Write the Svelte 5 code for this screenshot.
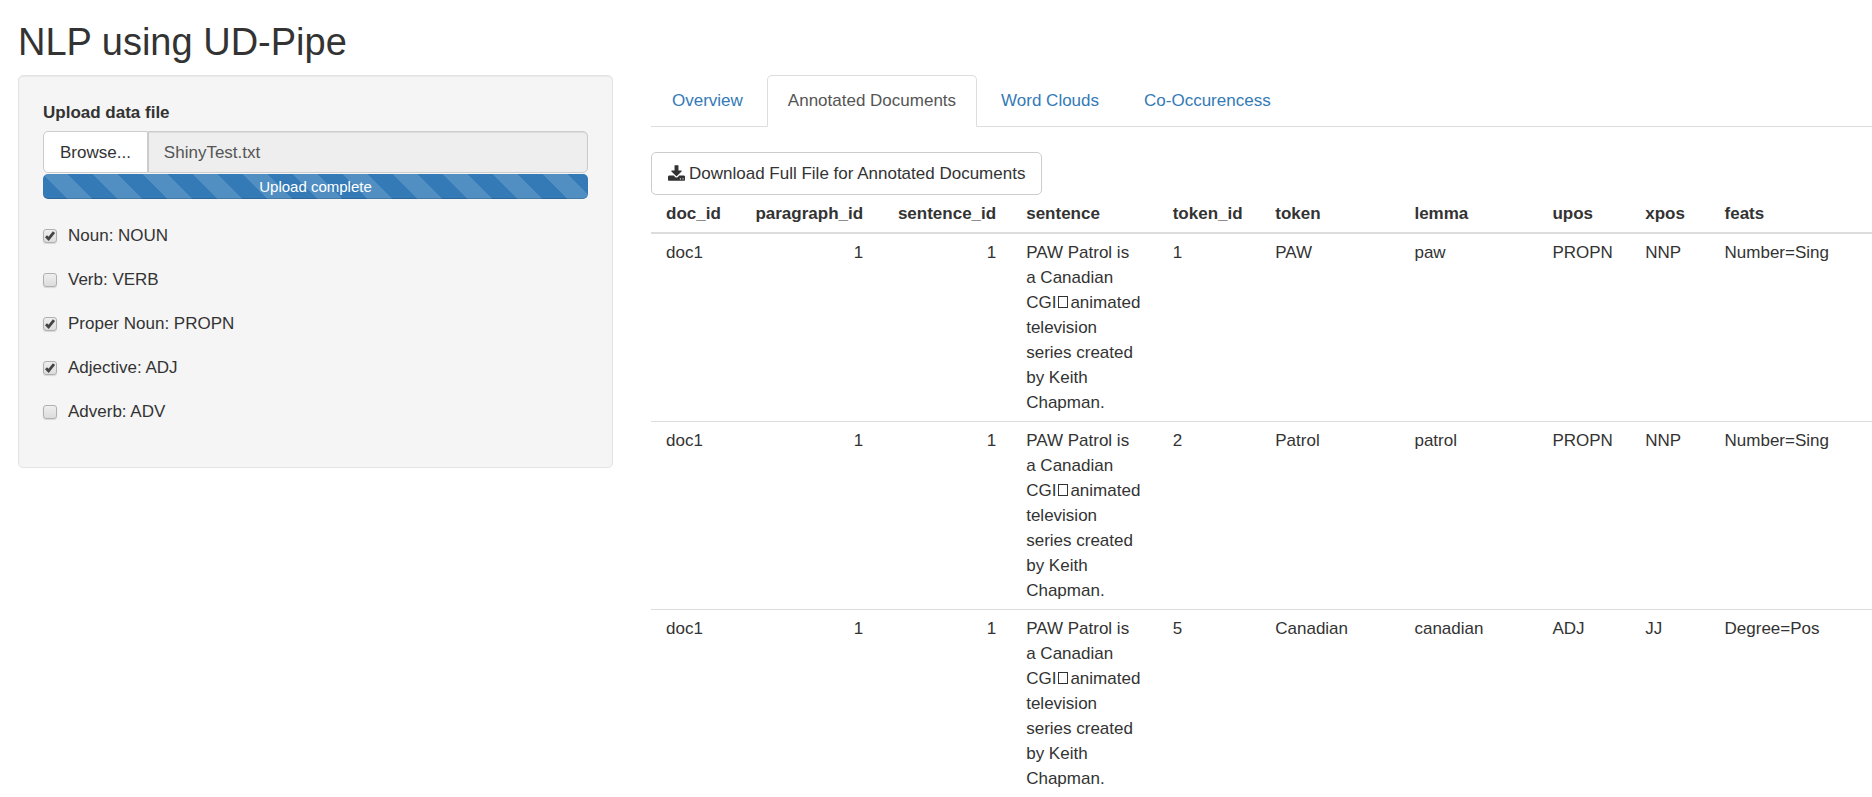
<script>
  const tabs = ['Overview', 'Annotated Documents', 'Word Clouds', 'Co-Occurencess'];
  let active = $state('Annotated Documents');

  let filters = $state([
    { id: 'noun', label: 'Noun: NOUN', checked: true },
    { id: 'verb', label: 'Verb: VERB', checked: false },
    { id: 'propn', label: 'Proper Noun: PROPN', checked: true },
    { id: 'adj', label: 'Adjective: ADJ', checked: true },
    { id: 'adv', label: 'Adverb: ADV', checked: false }
  ]);

  const columns = [
    { key: 'doc_id', width: 7.1 },
    { key: 'paragraph_id', width: 11.5, numeric: true },
    { key: 'sentence_id', width: 10.9, numeric: true },
    { key: 'sentence', width: 12 },
    { key: 'token_id', width: 8.4 },
    { key: 'token', width: 11.4 },
    { key: 'lemma', width: 11.3 },
    { key: 'upos', width: 7.6 },
    { key: 'xpos', width: 6.5 },
    { key: 'feats', width: 13.3 }
  ];

  const base = { doc_id: 'doc1', paragraph_id: 1, sentence_id: 1 };
  const rows = [
    { ...base, token_id: 1, token: 'PAW', lemma: 'paw', upos: 'PROPN', xpos: 'NNP', feats: 'Number=Sing' },
    { ...base, token_id: 2, token: 'Patrol', lemma: 'patrol', upos: 'PROPN', xpos: 'NNP', feats: 'Number=Sing' },
    { ...base, token_id: 5, token: 'Canadian', lemma: 'canadian', upos: 'ADJ', xpos: 'JJ', feats: 'Degree=Pos' }
  ];
</script>

<div class="page">
  <h2>NLP using UD-Pipe</h2>
  <div class="layout">
    <form class="well">
      <label class="title" for="file-name">Upload data file</label>
      <div class="file">
        <button type="button">Browse...</button>
        <input id="file-name" type="text" value="ShinyTest.txt" readonly />
      </div>
      <div class="progress">Upload complete</div>
      <div class="filters">
        {#each filters as f (f.id)}
          <label for={f.id}><input id={f.id} type="checkbox" bind:checked={f.checked} />{f.label}</label>
        {/each}
      </div>
    </form>

    <main>
      <nav>
        {#each tabs as tab}
          <a href="#tab" class:active={tab === active} onclick={() => (active = tab)}>{tab}</a>
        {/each}
      </nav>
      <button class="download" type="button">
        <svg viewBox="0 0 1664 1536" aria-hidden="true"><path d="M1280 1344q0-26-19-45t-45-19-45 19-19 45 19 45 45 19 45-19 19-45zM1536 1344q0-26-19-45t-45-19-45 19-19 45 19 45 45 19 45-19 19-45zM1664 1120v320q0 40-28 68t-68 28h-1472q-40 0-68-28t-28-68v-320q0-40 28-68t68-28h465l135 136q58 56 136 56t136-56l136-136h464q40 0 68 28t28 68zM1339 551q17 41-14 70l-448 448q-18 19-45 19t-45-19l-448-448q-31-29-14-70 17-39 59-39h256v-448q0-26 19-45t45-19h256q26 0 45 19t19 45v448h256q42 0 59 39z" /></svg>
        Download Full File for Annotated Documents
      </button>
      <table>
        <colgroup>
          {#each columns as c}<col style="width: {c.width}%" />{/each}
        </colgroup>
        <thead>
          <tr>{#each columns as c}<th class:numeric={c.numeric}>{c.key}</th>{/each}</tr>
        </thead>
        <tbody>
          {#each rows as row}
            <tr>
              {#each columns as c}
                {#if c.key === 'sentence'}
                  <td>PAW Patrol is a Canadian <span class="word">CGI<span class="box"></span>animated</span> television series created by Keith Chapman.</td>
                {:else}
                  <td class:numeric={c.numeric}>{row[c.key]}</td>
                {/if}
              {/each}
            </tr>
          {/each}
        </tbody>
      </table>
    </main>
  </div>
</div>

<style>
  :global(body) {
    margin: 0;
    background: #fff;
  }
  .page {
    padding: 21px 0 0 18px;
    color: #333;
    font: 17px/25px "Liberation Sans", Arial, sans-serif;
  }
  .page * {
    box-sizing: border-box;
  }
  h2 {
    margin: 0 0 12px;
    font-size: 38px;
    line-height: 42px;
    font-weight: 400;
  }
  .layout {
    display: grid;
    grid-template-columns: 595fr 1221fr;
    gap: 38px;
    align-items: start;
  }
  button,
  input {
    margin: 0;
    color: inherit;
    font: inherit;
  }
  .well {
    padding: 24px;
    background: #f5f5f5;
    border: 1px solid #e3e3e3;
    border-radius: 5px;
    box-shadow: inset 0 1px 1px rgba(0, 0, 0, 0.05);
  }
  .title {
    display: block;
    margin-bottom: 6px;
    font-weight: 700;
  }
  .file {
    display: flex;
    height: 42px;
  }
  .file button {
    padding: 0 16px;
    background: #fff;
    border: 1px solid #ccc;
    border-radius: 5px 0 0 5px;
  }
  .file input {
    flex: 1;
    min-width: 0;
    padding: 0 15px;
    color: #555;
    background: #eee;
    border: 1px solid #ccc;
    border-radius: 0 5px 5px 0;
    box-shadow: inset 0 1px 1px rgba(0, 0, 0, 0.08);
  }
  .progress {
    margin-top: 1px;
    color: #fff;
    font-size: 15px;
    text-align: center;
    background: linear-gradient(45deg, rgba(255, 255, 255, 0.15) 25%, transparent 25%, transparent 50%, rgba(255, 255, 255, 0.15) 50%, rgba(255, 255, 255, 0.15) 75%, transparent 75%) 0 0 / 50px 50px #337ab7;
    border-radius: 5px;
    box-shadow: inset 0 -1px 0 rgba(0, 0, 0, 0.15);
  }
  .filters {
    display: grid;
    gap: 19px;
    margin: 24px 0 19px;
  }
  .filters label {
    display: flex;
    align-items: center;
    gap: 11px;
  }
  .filters input {
    appearance: none;
    width: 14px;
    height: 14px;
    border: 1px solid #b0b0b0;
    border-radius: 3px;
    background: linear-gradient(#eee, #dcdcdc);
    box-shadow: 0 1px 1px rgba(0, 0, 0, 0.12);
  }
  .filters input:checked {
    background: url("data:image/svg+xml,%3Csvg xmlns='http://www.w3.org/2000/svg' viewBox='0 0 12 12'%3E%3Cpath d='M2 6.2 4.6 8.8 10 2.2' fill='none' stroke='%23444' stroke-width='2.8'/%3E%3C/svg%3E") center / 12px 12px no-repeat, linear-gradient(#eee, #dcdcdc);
  }
  main {
    min-width: 0;
  }
  nav {
    display: flex;
    gap: 3px;
    margin-bottom: 25px;
    border-bottom: 1px solid #ddd;
  }
  nav a {
    margin-bottom: -1px;
    padding: 12px 20px 13px;
    color: #337ab7;
    text-decoration: none;
    border: 1px solid transparent;
    border-radius: 5px 5px 0 0;
  }
  nav a.active {
    color: #555;
    background: #fff;
    border-color: #ddd #ddd #fff;
  }
  .download {
    display: flex;
    align-items: center;
    gap: 4px;
    height: 43px;
    padding: 0 16px;
    background: #fff;
    border: 1px solid #ccc;
    border-radius: 5px;
  }
  .download svg {
    width: 17px;
    height: 16px;
    margin-bottom: 2px;
    fill: #333;
  }
  table {
    width: 100%;
    table-layout: fixed;
    border-collapse: separate;
    border-spacing: 0;
  }
  th,
  td {
    padding: 6px 15px;
    text-align: left;
    vertical-align: top;
  }
  th {
    border-bottom: 2px solid #ddd;
  }
  tr + tr td {
    border-top: 1px solid #ddd;
  }
  .numeric {
    text-align: right;
  }
  .word {
    white-space: nowrap;
  }
  /* Placeholder shown for the unprintable character in the source text. */
  .box {
    display: inline-block;
    width: 10px;
    height: 12px;
    margin: 0 2px;
    border: 1px solid #333;
    vertical-align: baseline;
  }
</style>
